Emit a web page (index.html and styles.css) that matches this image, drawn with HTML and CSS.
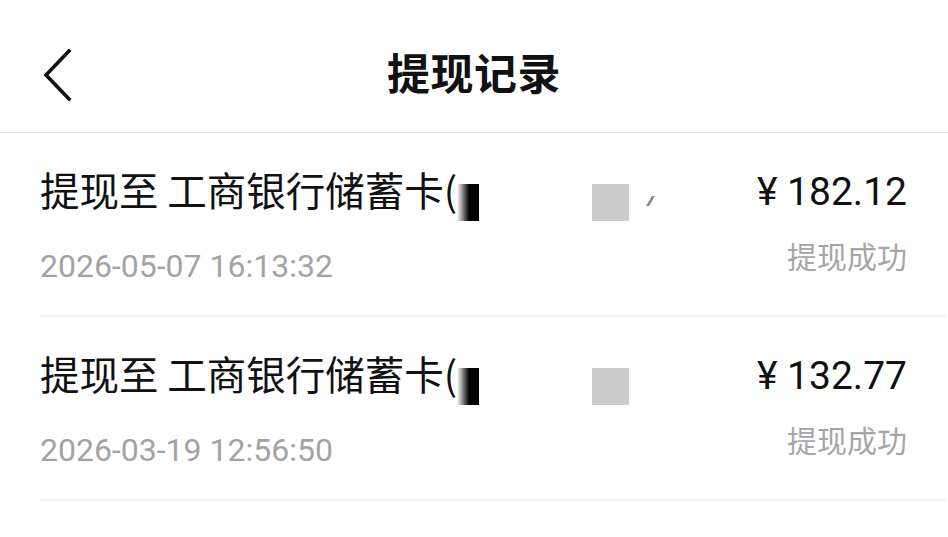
FILE: index.html
```html
<!DOCTYPE html>
<html lang="zh-CN">
<head>
<meta charset="utf-8">
<title>提现记录</title>
<link rel="stylesheet" href="styles.css">
</head>
<body>
<header class="topbar">
  <button class="back" aria-label="返回">
    <svg width="30" height="52" viewBox="0 0 30 52"><polyline points="26,2 3,26 26,50" fill="none" stroke="#111" stroke-width="3.6" stroke-linecap="square" stroke-linejoin="miter"/></svg>
  </button>
  <h1 class="title">提现记录</h1>
  <span class="spacer"></span>
</header>
<main class="list">
  <div class="item">
    <div class="left">
      <div class="name">提现至 工商银行储蓄卡(<span class="mask-dark"></span><span class="mask-gray"></span><span class="mask-tick"></span></div>
      <div class="date">2026-05-07 16:13:32</div>
    </div>
    <div class="right">
      <div class="amount">¥ 182.12</div>
      <div class="status">提现成功</div>
    </div>
  </div>
  <div class="item">
    <div class="left">
      <div class="name">提现至 工商银行储蓄卡(<span class="mask-dark"></span><span class="mask-gray"></span></div>
      <div class="date">2026-03-19 12:56:50</div>
    </div>
    <div class="right">
      <div class="amount">¥ 132.77</div>
      <div class="status">提现成功</div>
    </div>
  </div>
</main>
</body>
</html>
```
FILE: styles.css
```css
* { box-sizing: border-box; }
html, body { margin: 0; padding: 0; background: #fff; }
body {
  width: 948px;
  height: 537px;
  overflow: hidden;
  font-family: "Noto Sans CJK SC", "Noto Sans", sans-serif;
  color: #111;
}
.topbar {
  height: 133px;
  display: grid;
  grid-template-columns: 1fr auto 1fr;
  align-items: center;
  border-bottom: 1px solid #e4e4e4;
  padding: 0 43px;
}
.back {
  justify-self: start;
  border: 0;
  background: none;
  padding: 0;
  display: flex;
  margin-top: 18px;
}
.title {
  margin: 10px 0 0;
  font-size: 43px;
  font-weight: 700;
  letter-spacing: 0.5px;
  line-height: 50px;
}
.list { padding-left: 40px; padding-right: 2px; }
.item {
  height: 184px;
  display: flex;
  justify-content: space-between;
  align-items: flex-start;
  border-bottom: 2px solid #f3f3f3;
  padding-right: 39px;
}
.left { padding-top: 32px; }
.name {
  font-size: 39.5px;
  line-height: 48px;
  white-space: nowrap;
}
.mask-dark,
.mask-gray {
  display: inline-block;
  height: 37px;
  vertical-align: baseline;
  margin-bottom: -15px;
}
.mask-dark {
  width: 22px;
  background: linear-gradient(90deg, rgba(0,0,0,0), #000 55%);
}
.mask-gray {
  width: 37px;
  margin-left: 113px;
  background: #cccccc;
}
.mask-tick {
  display: inline-block;
  width: 3px;
  height: 10px;
  margin-left: 20px;
  background: #888;
  transform: skewX(-30deg);
}
.date {
  margin-top: 33px;
  font-family: "Roboto", "Noto Sans", sans-serif;
  font-size: 32px;
  line-height: 40px;
  color: #a3a3a3;
  letter-spacing: 0;
}
.right {
  padding-top: 37px;
  display: flex;
  flex-direction: column;
  align-items: flex-end;
}
.amount {
  font-family: "Roboto", "Noto Sans", sans-serif;
  font-size: 39px;
  line-height: 44px;
  color: #111;
}
.status {
  margin-top: 21px;
  font-size: 30px;
  line-height: 40px;
  color: #a6a6a6;
}
```
